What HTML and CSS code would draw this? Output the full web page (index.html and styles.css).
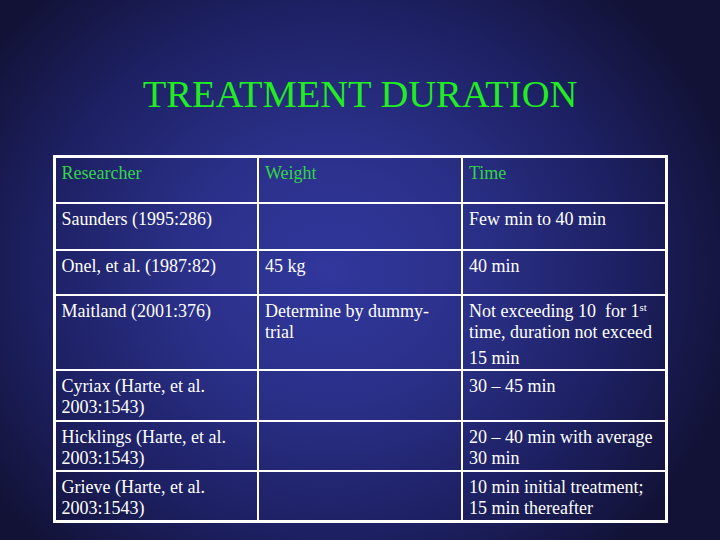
FILE: index.html
```html
<!DOCTYPE html>
<html>
<head>
<meta charset="utf-8">
<link rel="stylesheet" href="styles.css">
</head>
<body>
<div class="slide">
  <h1 class="title">TREATMENT DURATION</h1>
  <table class="grid">
    <colgroup><col class="c1"><col class="c2"><col class="c3"></colgroup>
    <tr class="r-head">
      <th>Researcher</th><th>Weight</th><th>Time</th>
    </tr>
    <tr class="r2">
      <td>Saunders (1995:286)</td><td></td><td>Few min to 40 min</td>
    </tr>
    <tr class="r3">
      <td>Onel, et al. (1987:82)</td><td>45 kg</td><td>40 min</td>
    </tr>
    <tr class="r4">
      <td>Maitland (2001:376)</td><td>Determine by dummy-<br>trial</td>
      <td>Not exceeding 10&nbsp; for 1<sup>st</sup><br>time, duration not exceed<div class="extra">15 min</div></td>
    </tr>
    <tr class="r5">
      <td>Cyriax (Harte, et al.<br>2003:1543)</td><td></td><td>30 – 45 min</td>
    </tr>
    <tr class="r6">
      <td>Hicklings (Harte, et al.<br>2003:1543)</td><td></td><td>20 – 40 min with average<br>30 min</td>
    </tr>
    <tr class="r7">
      <td>Grieve (Harte, et al.<br>2003:1543)</td><td></td><td>10 min initial treatment;<br>15 min thereafter</td>
    </tr>
  </table>
</div>
</body>
</html>
```
FILE: styles.css
```css
html, body {
  margin: 0;
  padding: 0;
}
body {
  width: 720px;
  height: 540px;
  overflow: hidden;
  background: radial-gradient(ellipse 420px 380px at 330px 270px, #31379c 0%, #2a3088 35%, #1d2062 70%, #121236 100%);
  font-family: "Liberation Serif", "Times New Roman", Times, serif;
}
.slide {
  width: 720px;
  height: 540px;
  display: flex;
  flex-direction: column;
  align-items: center;
}
.title {
  margin: 71px 0 0 0;
  height: 84px;
  font-family: "Liberation Serif", "Times New Roman", Times, serif;
  font-size: 38.5px;
  line-height: 46px;
  font-weight: normal;
  color: #22ec22;
}
.grid {
  border-collapse: collapse;
  border: 3px solid #ffffff;
  width: 613px;
  table-layout: fixed;
}
.c1, .c2, .c3 { width: 204px; }
.grid th, .grid td {
  border: 2px solid #ffffff;
  vertical-align: top;
  text-align: left;
  padding: 5px 6px 0 6px;
  font-family: "Liberation Serif", "Times New Roman", Times, serif;
  font-size: 18px;
  line-height: 21px;
  font-weight: normal;
  color: #ffffff;
}
.grid th {
  color: #33d44a;
}
.grid sup {
  font-size: 11px;
  line-height: 0;
  vertical-align: 6px;
}
.extra {
  margin-top: 5px;
}
.r-head { height: 46px; }
.r2 { height: 47px; }
.r3 { height: 45px; }
.r4 { height: 75px; }
.r5 { height: 51px; }
.r6 { height: 50px; }
.r7 { height: 51px; }
```
